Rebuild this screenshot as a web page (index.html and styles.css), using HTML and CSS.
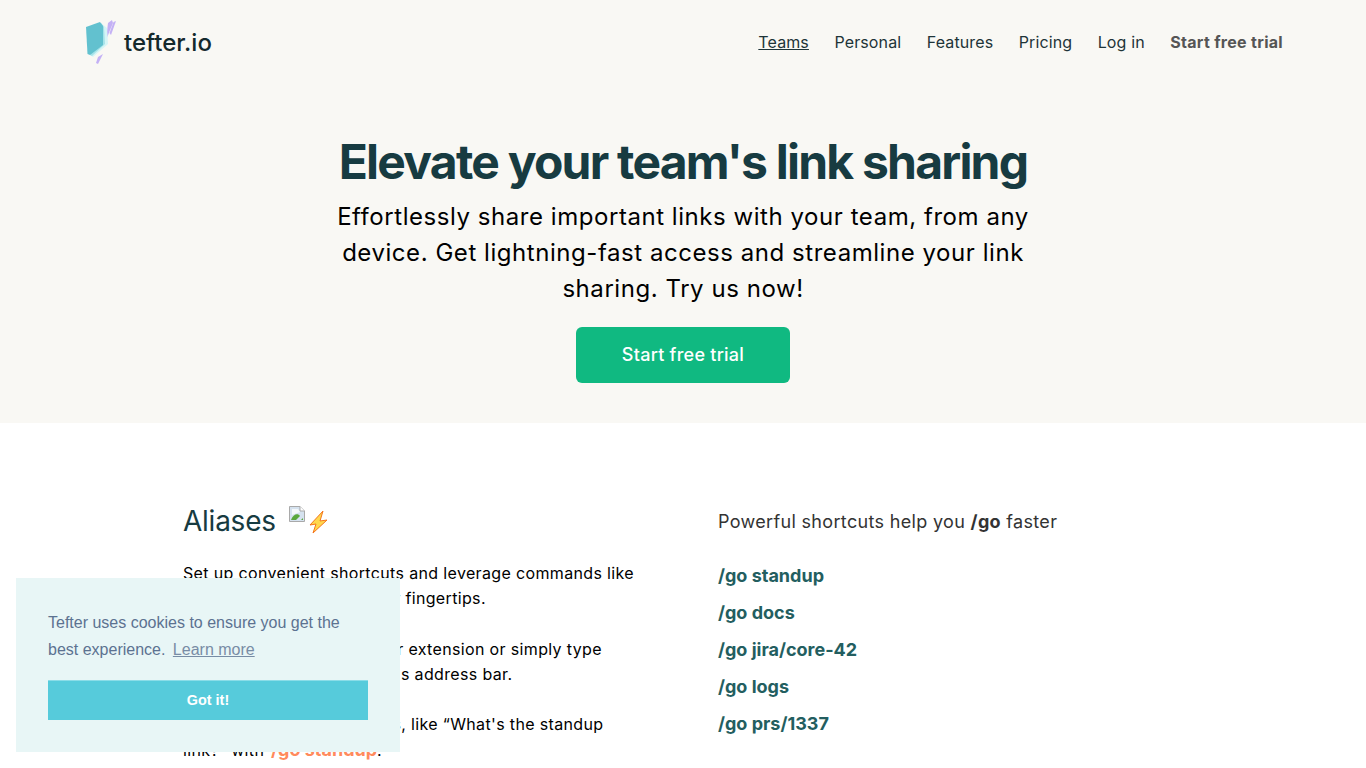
FILE: index.html
```html
<!DOCTYPE html>
<html lang="en">
<head>
    <meta charset="UTF-8">
    <meta name="viewport" content="width=device-width, initial-scale=1.0">
    <title>tefter.io</title>
    <link rel="stylesheet" href="styles.css">
</head>
<body>

    <div class="hero">
        <div class="nav">
            <a class="logo" href="#">
                <svg class="logo-mark" width="32" height="44" viewBox="0 0 32 44">
                    <path d="M28.5 2 L31 1 L26 15 L24.5 13 Z" fill="#c4b1f5"/>
                    <path d="M23 3 L27 0 L28 3 L21 20 Z" fill="#c4b1f5"/>
                    <path d="M18 34 L13 44 L11 43 L13 37 Z" fill="#c4b1f5"/>
                    <path d="M16 3 L22 8 L23 24 L8 37 L5 35 Z" fill="#d6f5f6"/>
                    <path d="M16 3 L19 7 L20 24 L7 36 L5 35 Z" fill="#a5e3e9"/>
                    <path d="M1 7 L15 2 L18 6 L18 25 L5 35 L2.5 34 Z" fill="#62c1cf"/>
                </svg>
                <span class="logo-text">tefter.io</span>
            </a>
            <div class="nav-links">
                <a href="#" class="current">Teams</a>
                <a href="#">Personal</a>
                <a href="#">Features</a>
                <a href="#">Pricing</a>
                <a href="#">Log in</a>
                <a href="#" class="trial-link">Start free trial</a>
            </div>
        </div>

        <div class="hero-body">
            <h1>Elevate your team's link sharing</h1>
            <p>Effortlessly share important links with your team, from any device. Get lightning-fast access and streamline your link sharing. Try us now!</p>
            <a href="#" class="hero-button">Start free trial</a>
        </div>
    </div>

    <div class="aliases">
        <div class="aliases-text">
            <h2>Aliases
                <svg class="broken-img" width="16" height="16" viewBox="0 0 16 16">
                    <path d="M0.5 0.5 H11 L15.5 5 V15.5 H0.5 Z" fill="#d5e2ef" stroke="#a9a9a9"/>
                    <path d="M11 0.5 V5 H15.5" fill="#fff" stroke="#a9a9a9"/>
                    <path d="M3 3 H9 L11 6 L3 9 Z" fill="#f4f8fb"/>
                    <path d="M2 14 C4 8 9 7 11 10 L7 14 Z" fill="#5aa83c"/>
                    <path d="M12 14 L14 12 V14 Z" fill="#5aa83c"/>
                </svg><svg class="bolt" width="22" height="24" viewBox="0 0 22 24">
                    <path d="M16 1 L3 15 L9 14 L6 23 L20 10 L13 11 Z" fill="#ffd84d" stroke="#f4761c" stroke-width="1" stroke-linejoin="round"/>
                </svg>
            </h2>
            <p>Set up convenient shortcuts and leverage commands like /go to get your links at your fingertips.</p>
            <p>Use it through your browser extension or simply type<br>/go docs into your browser's address bar.</p>
            <p>Answer recurring questions, like “What's the standup<br>link?” with <b class="orange">/go standup</b>.</p>
        </div>
        <div class="aliases-list">
            <div class="list-title">Powerful shortcuts help you <b>/go</b> faster</div>
            <a href="#">/go standup</a>
            <a href="#">/go docs</a>
            <a href="#">/go jira/core-42</a>
            <a href="#">/go logs</a>
            <a href="#">/go prs/1337</a>
        </div>
    </div>

    <div class="cookie">
        <div class="cookie-msg">Tefter uses cookies to ensure you get the best experience. <a href="#">Learn more</a></div>
        <a href="#" class="cookie-btn">Got it!</a>
    </div>

</body>
</html>
```

FILE: styles.css
```css
html, body {
    height: 768px;
    overflow: hidden;
}

body {
    margin: 0;
    font-family: Inter, "Open Sans", sans-serif;
    background-color: #fff;
    color: #000;
}

a {
    text-decoration: none;
    color: inherit;
}

.hero {
    height: 423px;
    background-color: #f9f8f4;
}

.nav {
    display: flex;
    justify-content: space-between;
    align-items: center;
    height: 84px;
    padding: 0 83px 0 85px;
}

.logo {
    display: flex;
    align-items: center;
}

.logo-mark {
    margin-right: 7px;
}

.logo-text {
    font-size: 24px;
    font-weight: 500;
    color: #14292c;
}

.nav-links {
    display: flex;
    gap: 25.5px;
    font-size: 16px;
    letter-spacing: 0.12px;
    color: #1e3438;
}

.nav-links .current {
    text-decoration: underline;
}

.nav-links .trial-link {
    font-weight: 700;
    letter-spacing: 0.3px;
    color: #555;
}

.hero-body {
    width: 720px;
    margin: 0 auto;
    padding-top: 49px;
    text-align: center;
}

.hero-body h1 {
    margin: 0;
    font-size: 48px;
    line-height: 58px;
    font-weight: 700;
    letter-spacing: -1.77px;
    color: #173b41;
}

.hero-body p {
    margin: 8px 0 20px;
    font-size: 24px;
    line-height: 36px;
    letter-spacing: 0.55px;
}

.hero-button {
    display: inline-block;
    width: 214px;
    height: 56px;
    line-height: 56px;
    font-size: 18px;
    font-weight: 500;
    letter-spacing: 0.25px;
    color: #fff;
    background-color: #10b981;
    border-radius: 6px;
}

.aliases {
    display: flex;
    padding: 76px 0 0 183px;
}

.aliases-text {
    width: 535px;
}

.aliases-text h2 {
    display: flex;
    align-items: center;
    margin: 0 0 18px;
    font-size: 28px;
    line-height: 44px;
    font-weight: 400;
    letter-spacing: -0.25px;
    color: #173b41;
}

.broken-img {
    margin: -15px 0 0 13px;
}

.bolt {
    margin: 2px 0 0 2px;
}

.aliases-text p {
    width: 470px;
    margin: 0 0 25px;
    font-size: 16px;
    line-height: 25.3px;
    letter-spacing: 0.35px;
}

.orange {
    margin-left: 2px;
    font-size: 18px;
    letter-spacing: 0;
    color: #ff8a5c;
}

.list-title {
    margin-top: 11px;
    margin-bottom: 23px;
    font-size: 18px;
    line-height: 24px;
    letter-spacing: 0.33px;
    color: #333;
}

.aliases-list a {
    display: block;
    height: 37px;
    line-height: 37px;
    font-size: 18px;
    font-weight: 700;
    color: #235e60;
}

.cookie {
    position: fixed;
    left: 16px;
    bottom: 16px;
    box-sizing: border-box;
    width: 384px;
    height: 174px;
    padding: 31px 32px 32px;
    background-color: #e8f6f6;
    font-family: "Liberation Sans", Arial, sans-serif;
    font-size: 16px;
    line-height: 27px;
    color: #5c7291;
}

.cookie-msg a {
    margin-left: 3px;
    text-decoration: underline;
    opacity: 0.8;
}

.cookie-btn {
    display: block;
    box-sizing: border-box;
    height: 40px;
    margin-top: 17px;
    border-top: 1px solid #8adde8;
    line-height: 38px;
    text-align: center;
    font-size: 14.4px;
    font-weight: 700;
    color: #fff;
    background-color: #56cbdb;
}
```
